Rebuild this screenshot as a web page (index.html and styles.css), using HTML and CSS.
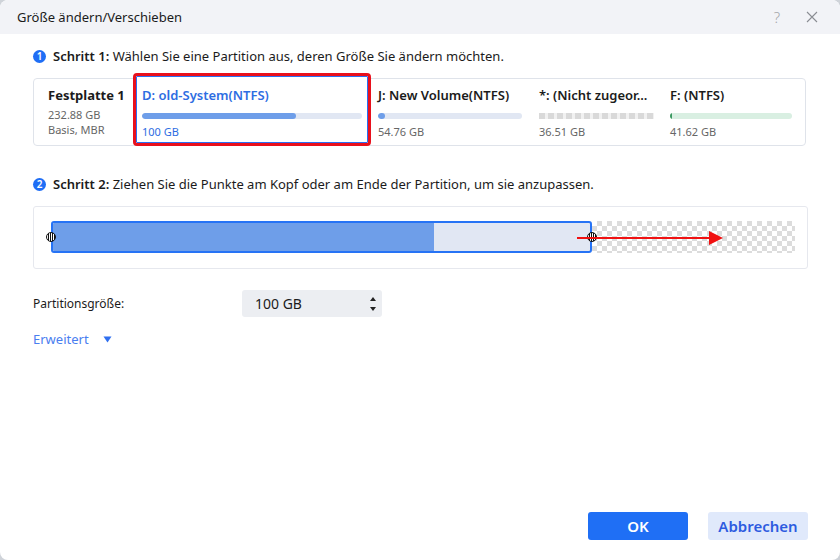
FILE: index.html
```html
<!DOCTYPE html>
<html lang="de">
<head>
<meta charset="utf-8">
<title>Größe ändern/Verschieben</title>
<link rel="stylesheet" href="styles.css">
</head>
<body>
<div class="window">
  <div class="titlebar">
    <span class="title">Größe ändern/Verschieben</span>
    <div class="title-actions">
      <span class="help">?</span>
      <svg class="close" width="12" height="12" viewBox="0 0 12 12"><path d="M1 1L11 11M11 1L1 11" stroke="#8a8d93" stroke-width="1.1" fill="none"/></svg>
    </div>
  </div>
  <div class="content">
    <div class="step step1"><span class="num">1</span><span><b>Schritt 1:</b> Wählen Sie eine Partition aus, deren Größe Sie ändern möchten.</span></div>
    <div class="disk-panel">
      <div class="disk-info">
        <div class="disk-name">Festplatte 1</div>
        <div class="disk-sub">232.88 GB</div>
        <div class="disk-sub">Basis, MBR</div>
      </div>
      <div class="part selected">
        <div class="part-name">D: old-System(NTFS)</div>
        <div class="bar"><div class="fill" style="width:70%"></div></div>
        <div class="part-size">100 GB</div>
      </div>
      <div class="part p-j">
        <div class="part-name">J: New Volume(NTFS)</div>
        <div class="bar"><div class="fill" style="width:5%"></div></div>
        <div class="part-size">54.76 GB</div>
      </div>
      <div class="part p-u">
        <div class="part-name">*: (Nicht zugeor...</div>
        <div class="bar dashed"></div>
        <div class="part-size">36.51 GB</div>
      </div>
      <div class="part p-f">
        <div class="part-name">F: (NTFS)</div>
        <div class="bar green"><div class="fill" style="width:2px"></div></div>
        <div class="part-size">41.62 GB</div>
      </div>
    </div>
    <div class="step step2"><span class="num">2</span><span><b>Schritt 2:</b> Ziehen Sie die Punkte am Kopf oder am Ende der Partition, um sie anzupassen.</span></div>
    <div class="slider-panel">
      <div class="track">
        <div class="range"><div class="used"></div></div>
        <div class="free"></div>
        <span class="handle h-left"></span>
        <span class="handle h-right"></span>
        <svg class="arrow" width="146" height="16" viewBox="0 0 146 16"><path d="M0 8H133" stroke="#f01010" stroke-width="2"/><path d="M132 1L146 8L132 15Z" fill="#f01010"/></svg>
      </div>
    </div>
    <div class="size-row">
      <span class="size-label">Partitionsgröße:</span>
      <div class="size-input">
        <span>100 GB</span>
        <svg class="spin" width="8" height="20" viewBox="0 0 8 20"><path d="M4 3L7 7H1Z" fill="#222"/><path d="M4 17L7 13H1Z" fill="#222"/></svg>
      </div>
    </div>
    <div class="advanced"><span>Erweitert</span><svg width="9" height="7" viewBox="0 0 9 7"><path d="M0.5 0.5H8.5L4.5 6.5Z" fill="#2f6ff0"/></svg></div>
  </div>
  <div class="footer">
    <button class="btn ok">OK</button>
    <button class="btn cancel">Abbrechen</button>
  </div>
</div>
</body>
</html>
```
FILE: styles.css
```css
html, body {
  margin: 0;
  padding: 0;
  background: #cfd3d9;
}
body {
  font-family: "Noto Sans", "Open Sans", sans-serif;
  color: #1b1b1b;
}
.window {
  width: 840px;
  height: 560px;
  background: #fff;
  border-radius: 8px;
  overflow: hidden;
  display: flex;
  flex-direction: column;
  box-sizing: border-box;
}
.titlebar {
  height: 34px;
  flex: none;
  background: #f2f3f7;
  display: flex;
  align-items: center;
  justify-content: space-between;
  padding: 0 22px 0 17px;
  font-size: 13px;
}
.title-actions {
  display: flex;
  align-items: center;
  gap: 26px;
}
.help {
  color: #a4a6ab;
  font-size: 15px;
  font-weight: 300;
}
.content {
  flex: 1;
  padding: 0 32px 0 33px;
}
.step {
  display: flex;
  align-items: center;
  gap: 7px;
  font-size: 13px;
  height: 20px;
}
.step b { font-weight: 600; }
.step1 { margin-top: 12px; }
.num {
  width: 13px;
  height: 13px;
  border-radius: 50%;
  background: #1f6ef5;
  color: #fff;
  font-size: 10px;
  font-weight: 600;
  display: flex;
  align-items: center;
  justify-content: center;
  flex: none;
}
.disk-panel {
  margin-top: 12px;
  margin-right: 2px;
  height: 68px;
  box-sizing: border-box;
  border: 1px solid #dfe3ea;
  border-radius: 4px;
  display: flex;
}
.disk-info {
  width: 102px;
  flex: none;
  box-sizing: border-box;
  padding: 7px 0 0 14px;
}
.disk-name {
  font-size: 13px;
  font-weight: 700;
  line-height: 18px;
}
.disk-sub {
  font-size: 11px;
  color: #666;
  line-height: 15px;
}
.disk-name + .disk-sub { margin-top: 3px; }
.part {
  box-sizing: border-box;
  padding-top: 7px;
}
.part-name {
  font-size: 13px;
  font-weight: 600;
  line-height: 18px;
  white-space: nowrap;
}
.part-size {
  font-size: 11px;
  color: #666;
  line-height: 16px;
  margin-top: 5px;
}
.bar {
  height: 6px;
  border-radius: 3px;
  background: #e1e7f3;
  margin-top: 9px;
  overflow: hidden;
}
.bar .fill {
  height: 100%;
  background: #6e9ee9;
  border-radius: 3px;
}
.bar.dashed {
  background: repeating-linear-gradient(90deg, #d9d9d9 0 6px, #f1f1f1 6px 9px);
  border-radius: 0;
}
.bar.green { background: #d9efe2; }
.bar.green .fill { background: #3d9a62; border-radius: 0; }
.selected {
  width: 232px;
  height: 67px;
  margin-top: -3px;
  border: 1.5px solid #2a6ff2;
  border-radius: 1px;
  outline: 3px solid #e8101c;
  padding: 9px 5px 0 5px;
  background: #fff;
}
.selected .part-name { color: #2d6de2; }
.selected .part-size { color: #2d6de2; }
.p-j { width: 144px; margin-left: 10px; }
.p-u { width: 115px; margin-left: 17px; }
.p-f { width: 122px; margin-left: 16px; }
.step2 { margin-top: 28px; }
.slider-panel {
  margin-top: 12px;
  height: 63px;
  box-sizing: border-box;
  border: 1px solid #e6e8ee;
  border-radius: 3px;
  padding: 14px 12px 0 17px;
}
.track {
  position: relative;
  display: flex;
  height: 32px;
}
.range {
  width: 542px;
  box-sizing: border-box;
  border: 2px solid #2673f5;
  border-radius: 3px;
  background: #e1e7f3;
  overflow: hidden;
}
.used {
  width: 381px;
  height: 100%;
  background: #6e9ee9;
}
.free {
  width: 204px;
  margin: 0;
  background-color: #fff;
  background-image:
    linear-gradient(45deg, #dcdcdc 25%, transparent 25%, transparent 75%, #dcdcdc 75%),
    linear-gradient(45deg, #dcdcdc 25%, transparent 25%, transparent 75%, #dcdcdc 75%);
  background-size: 10px 10px;
  background-position: 0 0, 5px 5px;
}
.handle {
  position: absolute;
  top: 11px;
  width: 10px;
  height: 10px;
  box-sizing: border-box;
  border: 1.5px solid #111;
  border-radius: 50%;
  background: repeating-linear-gradient(90deg, #fff 0 1px, #111 1px 2px);
}
.h-left { left: -5px; }
.h-right { left: 536px; }
.arrow {
  position: absolute;
  left: 526px;
  top: 9px;
}
.size-row {
  margin-top: 21px;
  display: flex;
  align-items: center;
  height: 27px;
}
.size-label {
  font-size: 12px;
  width: 209px;
}
.size-input {
  width: 140px;
  height: 27px;
  box-sizing: border-box;
  background: #eceef2;
  border-radius: 3px;
  display: flex;
  align-items: center;
  justify-content: space-between;
  padding: 0 5px 0 13px;
  font-size: 14px;
}
.advanced {
  margin-top: 12px;
  display: flex;
  align-items: center;
  gap: 14px;
  font-size: 13px;
  color: #4a7ef0;
  height: 20px;
}
.footer {
  flex: none;
  display: flex;
  justify-content: flex-end;
  gap: 20px;
  padding: 0 32px 20px 0;
}
.btn {
  width: 100px;
  height: 28px;
  border: none;
  border-radius: 3px;
  font-family: "Noto Sans", "Open Sans", sans-serif;
  font-size: 15px;
  font-weight: 600;
  padding: 0;
}
.ok { background: #1f6ff5; color: #fff; }
.cancel { background: #e0e9fb; color: #2d5be0; }
```
